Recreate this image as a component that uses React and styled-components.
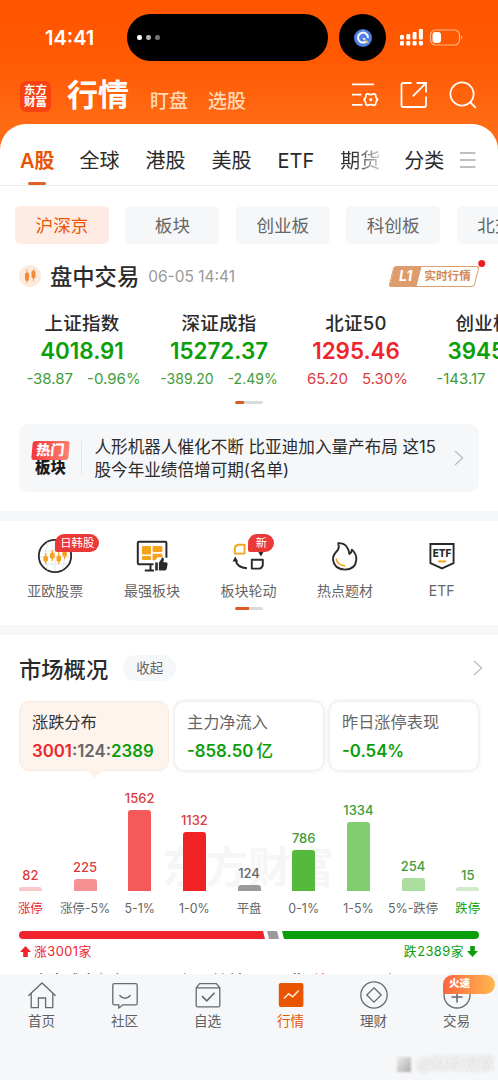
import styled, { createGlobalStyle } from "styled-components";

const RED = "#f0242c";
const GREEN = "#0a9e0a";
const ORANGE = "#ea5504";

const colors = { up: RED, down: GREEN, flat: "#666" };

const topTabs = ["A股", "全球", "港股", "美股", "ETF", "期货", "分类"];

const boards = ["沪深京", "板块", "创业板", "科创板", "北交所"];

const indexes = [
  { name: "上证指数", value: "4018.91", diff: "-38.87", pct: "-0.96%", dir: "down" },
  { name: "深证成指", value: "15272.37", diff: "-389.20", pct: "-2.49%", dir: "down", small: true },
  { name: "北证50", value: "1295.46", diff: "65.20", pct: "5.30%", dir: "up" },
  { name: "创业板指", value: "3945.57", diff: "-143.17", pct: "-3.50%", dir: "down" },
];

const bars = [
  { label: "涨停", value: 82, height: 4, fill: "#f9c9c9", text: "#dc3c40", mark: RED },
  { label: "涨停-5%", value: 225, height: 12, fill: "#f79090", text: "#dc3c40" },
  { label: "5-1%", value: 1562, height: 81, fill: "#f55a5a", text: "#dc3c40" },
  { label: "1-0%", value: 1132, height: 59, fill: "#f02222", text: "#dc3c40" },
  { label: "平盘", value: 124, height: 6, fill: "#9b9b9b", text: "#666" },
  { label: "0-1%", value: 786, height: 41, fill: "#55b93c", text: "#3f9c3a" },
  { label: "1-5%", value: 1334, height: 69, fill: "#82cc70", text: "#3f9c3a" },
  { label: "5%-跌停", value: 254, height: 13, fill: "#aadd9e", text: "#3f9c3a" },
  { label: "跌停", value: 15, height: 4, fill: "#d0ebc9", text: "#3f9c3a", mark: GREEN },
];

const Chevron = () => (
  <svg width="10" height="16" viewBox="0 0 10 16" fill="none" stroke="#bdbfc2" strokeWidth="1.4">
    <path d="M1 1l7.6 7L1 15" />
  </svg>
);

const StatusIcons = () => (
  <svg width="64" height="18" viewBox="0 0 64 18">
    <g fill="#fff">
      <rect x="0" y="6" width="4" height="4.5" rx="1" />
      <rect x="6.3" y="5" width="4" height="5.5" rx="1" />
      <rect x="12.6" y="3" width="4" height="7.5" rx="1" />
      <rect x="18.9" y="0" width="4" height="10.5" rx="1" />
      <rect x="0" y="12" width="4" height="4.5" rx="1.2" />
      <rect x="6.3" y="12" width="4" height="4.5" rx="1.2" />
      <rect x="12.6" y="12" width="4" height="4.5" rx="1.2" />
      <rect x="18.9" y="12" width="4" height="4.5" rx="1.2" />
      <rect x="32.5" y="3" width="8.5" height="11" rx="3" />
    </g>
    <rect x="30.5" y="1" width="29" height="15" rx="5" fill="none" stroke="#ffb58a" strokeWidth="1.2" />
    <path d="M61.2 6q2.4 2.3 0 4.8z" fill="#ffb58a" />
  </svg>
);

const FilterIcon = () => (
  <svg width="28" height="26" viewBox="0 0 28 26" fill="none" stroke="#fff" strokeWidth="1.8">
    <path d="M1 2.4h22M1 12.6h9.5M1 22.8h10.5" />
    <path
      d="M16.4 11.8q3.4 1.6 6.8 0 1 .2 1.4 1.2-.2 2.6 2 4.6-2.2 2-2 4.6-.4 1-1.4 1.2-3.4-1.6-6.8 0-1-.2-1.4-1.2.2-2.6-2-4.6 2.2-2 2-4.6.4-1 1.4-1.2z"
      strokeLinejoin="round"
    />
    <circle cx="19.8" cy="17.6" r="1.6" fill="#fff" stroke="none" />
  </svg>
);

const ShareIcon = () => (
  <svg width="28" height="28" viewBox="0 0 28 28" fill="none" stroke="#fff" strokeWidth="1.8">
    <path d="M11.5 2H3.2Q1.5 2 1.5 3.7v20.6Q1.5 26 3.2 26h21.1q1.7 0 1.7-1.7V15.5" />
    <path d="M12.8 15.4L25.6 2.4M16.6 2H26v9.6" />
  </svg>
);

const SearchIcon = () => (
  <svg width="28" height="28" viewBox="0 0 28 28" fill="none" stroke="#fff" strokeWidth="1.8">
    <circle cx="13" cy="13" r="11.6" />
    <path d="M21 21l5.8 5.8" />
  </svg>
);

const GlobeStockIcon = () => (
  <svg width="36" height="36" viewBox="0 0 36 36">
    <circle cx="18" cy="18" r="16.2" fill="#fff" stroke="#2a2a2a" strokeWidth="1.8" />
    <path d="M5 13h26M3 19h30M5 26h26M18 3v30M11 4q-5 14 0 28M25 4q5 14 0 28" stroke="#e3e6ea" strokeWidth="1" fill="none" />
    <g stroke="#f6a21b" strokeWidth="1.2">
      <path d="M8.7 15v11M15.3 12v11M21.8 14v12M27.6 11v10" />
      <g fill="#f6a21b">
        <rect x="7" y="18.5" width="3.4" height="4.6" rx="1" />
        <rect x="13.6" y="15" width="3.4" height="5" rx="1" />
        <rect x="20.1" y="18" width="3.4" height="5" rx="1" />
        <rect x="25.9" y="14" width="3.4" height="4" rx="1" />
      </g>
    </g>
  </svg>
);

const BoardIcon = () => (
  <svg width="32" height="34" viewBox="0 0 32 34">
    <path d="M17.5 25.3H2.8q-1 0-1-1V3.8q0-1 1-1h26.6q1 0 1 1v15" fill="none" stroke="#2a2a2a" strokeWidth="2" />
    <path d="M14.5 25v5.5M8.8 31.5H18" stroke="#2a2a2a" strokeWidth="2" />
    <g fill="#f6a21b">
      <rect x="6" y="7" width="9" height="8.5" rx="1" />
      <rect x="16.6" y="7" width="9.8" height="6" rx="1" />
      <rect x="6" y="17" width="9" height="4" rx="1" />
      <path d="M16.6 14.8h9.8v3.4h-4.8l-2.4 3h-2.6z" />
    </g>
    <path d="M19.2 23.5h2.6v8h-2.6zM22.9 23.8l2.4-3.8q.1-1.8 1.5-1.6 1.5.6 1 2.6l-.6 2.2h3q1.8.4 1.4 2l-1 4.8q-.4 1.5-2 1.5h-5.7z" fill="#2a2a2a" />
  </svg>
);

const RotateIcon = () => (
  <svg width="32" height="34" viewBox="0 0 32 34" fill="none" strokeWidth="1.9">
    <path d="M6.3 5.8h6.2v8.8H2.8V9.3q.6-3 3.5-3.5z" stroke="#f0a61f" strokeLinejoin="round" />
    <path d="M19.8 20.8h11v5.4q-.7 3-3.4 3.4h-7.6z" stroke="#2a2a2a" strokeLinejoin="round" />
    <path d="M3.6 21q1.3 7.6 11.4 8.2M17 6.5q9.8-.6 11.6 8.5" stroke="#2a2a2a" />
    <path d="M3.2 17.4l-2.6 5h5.6zM29 17.4l-2.8-4.6h5.4z" fill="#2a2a2a" />
  </svg>
);

const FlameIcon = () => (
  <svg width="28" height="30" viewBox="0 0 28 30" fill="none" strokeWidth="1.9">
    <path
      d="M7.2 2.2q9.4-1 11.2 10.8 2.3-1.4 2.5-4.4 4.9 4.4 4.4 10.2-.8 9.4-11.3 9.8Q3 28 2 18.6 1.8 14 6.2 9.8 8.6 7 7.2 2.2z"
      stroke="#2a2a2a"
      strokeLinejoin="round"
    />
    <path d="M5.2 17.5q1 6.8 8.8 7.4" stroke="#f0a61f" strokeWidth="1.7" />
  </svg>
);

const EtfIcon = () => (
  <svg width="28" height="28" viewBox="0 0 28 28">
    <path d="M2.4 2h23.2v19.2L14 26.4 2.4 21.2z" fill="none" stroke="#2a2a2a" strokeWidth="1.9" />
    <text x="14" y="15.4" textAnchor="middle" fontFamily="Inter" fontSize="10" fontWeight="800" fill="#2a2a2a">
      ETF
    </text>
    <path d="M10.2 19.4h7.8" stroke="#f0a61f" strokeWidth="2" />
  </svg>
);

const HomeIcon = () => (
  <svg width="30" height="30" viewBox="0 0 30 30" fill="none" stroke="#66696e" strokeWidth="1.3">
    <path d="M1.4 15.8L15 3l13.6 12.8M4.2 13.4v14.3h7.2V18h7.2v9.7h7.2V13.4" />
  </svg>
);

const ChatIcon = () => (
  <svg width="30" height="30" viewBox="0 0 30 30" fill="none" stroke="#66696e" strokeWidth="1.3">
    <path d="M4.4 3.6h21.2q1.6 0 1.6 1.6v18q0 1.6-1.6 1.6H13L8.8 28v-3.2H4.4q-1.6 0-1.6-1.6v-18q0-1.6 1.6-1.6z" />
    <path d="M9.4 15.2q5.6 6 11.2 0" strokeWidth="1.6" />
  </svg>
);

const PickIcon = () => (
  <svg width="30" height="30" viewBox="0 0 30 30" fill="none" stroke="#66696e" strokeWidth="1.3">
    <path d="M3.2 7.8l3.4-4.2h16.8l3.4 4.2v17.4q0 1.6-1.6 1.6H4.8q-1.6 0-1.6-1.6zM3.2 7.8h23.6" />
    <path d="M9 16.2l4.8 4.6 7.8-8" strokeWidth="1.6" />
  </svg>
);

const QuoteIcon = () => (
  <svg width="30" height="30" viewBox="0 0 30 30" fill="none">
    <rect x="2.8" y="3" width="24.6" height="24" rx="2" fill={ORANGE} />
    <path d="M8 18.6l4.7-4.8 4 3 6-6.2" stroke="#ffe9da" strokeWidth="1.5" />
  </svg>
);

const WealthIcon = () => (
  <svg width="30" height="30" viewBox="0 0 30 30" fill="none" stroke="#66696e" strokeWidth="1.3">
    <circle cx="15" cy="15" r="13.2" />
    <path d="M15 7.8l7.2 7.2-7.2 7.2L7.8 15z" />
  </svg>
);

const TradeIcon = () => (
  <svg width="30" height="30" viewBox="0 0 30 30" fill="none" stroke="#66696e" strokeWidth="1.3">
    <circle cx="15" cy="15" r="13" />
    <path d="M15 10v12.4M9.4 17h11.2" strokeWidth="1.6" />
  </svg>
);

const features = [
  { label: "亚欧股票", icon: <GlobeStockIcon />, tag: "日韩股" },
  { label: "最强板块", icon: <BoardIcon /> },
  { label: "板块轮动", icon: <RotateIcon />, tag: "新" },
  { label: "热点题材", icon: <FlameIcon /> },
  { label: "ETF", icon: <EtfIcon /> },
];

const navItems = [
  { label: "首页", icon: <HomeIcon /> },
  { label: "社区", icon: <ChatIcon /> },
  { label: "自选", icon: <PickIcon /> },
  { label: "行情", icon: <QuoteIcon />, active: true },
  { label: "理财", icon: <WealthIcon /> },
  { label: "交易", icon: <TradeIcon />, promo: "火速" },
];

export default function App() {
  return (
    <>
      <GlobalStyle />
      <Page>
        <StatusBar>
          <Clock>14:41</Clock>
          <Island>
            <Dot $o={1} />
            <Dot $o={0.7} />
            <Dot $o={0.45} />
          </Island>
          <AppBubble>
            <svg width="18" height="18" viewBox="0 0 18 18" fill="none">
              <circle cx="9" cy="9" r="9" fill="#4f7fe0" />
              <path d="M12 12.6A5 5 0 1 1 14 9" stroke="#fff" strokeWidth="2" />
              <path d="M8.4 8.4l3.6 1.4-2 1.8z" fill="#fff" />
              <path d="M11.4 11.6l2.6 2.2" stroke="#e8c34a" strokeWidth="1.8" />
            </svg>
          </AppBubble>
          <StatusIcons />
        </StatusBar>

        <TitleBar>
          <Logo>
            <span>东方</span>
            <span>财富</span>
          </Logo>
          <Title>行情</Title>
          <SubTitle>盯盘</SubTitle>
          <SubTitle>选股</SubTitle>
          <Tools>
            <FilterIcon />
            <ShareIcon />
            <SearchIcon />
          </Tools>
        </TitleBar>

        <Sheet>
          <Tabs>
            {topTabs.map((tab, i) => (
              <Tab key={tab} $active={i === 0} $fade={tab === "期货"}>
                {tab}
              </Tab>
            ))}
            <svg width="16" height="16" viewBox="0 0 16 16" stroke="#a9a9a9" strokeWidth="1.5">
              <path d="M0 1h15.5M0 8h15.5M0 15h15.5" />
            </svg>
          </Tabs>

          <Boards>
            {boards.map((board, i) => (
              <Board key={board} $active={i === 0}>
                {board}
              </Board>
            ))}
          </Boards>

          <SessionRow>
            <SessionIcon>
              <svg width="12" height="14" viewBox="0 0 12 14" fill="#f08c3c" stroke="#f08c3c">
                <path d="M3 0v14M9.5 0v12" strokeWidth="0.8" />
                <rect x="1.5" y="4" width="3" height="7.5" rx="1" />
                <rect x="8" y="2" width="3" height="7" rx="1" />
              </svg>
            </SessionIcon>
            <SessionTitle>盘中交易</SessionTitle>
            <SessionTime>06-05 14:41</SessionTime>
            <LevelBadge>
              <Level>
                <b>L1</b>
              </Level>
              <LevelText>
                <b>实时行情</b>
              </LevelText>
              <RedDot />
            </LevelBadge>
          </SessionRow>

          <Indexes>
            {indexes.map((item) => (
              <IndexItem key={item.name}>
                <IndexName>{item.name}</IndexName>
                <IndexValue $dir={item.dir}>{item.value}</IndexValue>
                <IndexChange $dir={item.dir} $small={item.small}>
                  <span>{item.diff}</span>
                  <span>{item.pct}</span>
                </IndexChange>
              </IndexItem>
            ))}
          </Indexes>
          <Pager $on={9} />

          <News>
            <NewsLogo>
              <HotTag>热门</HotTag>
              <HotText>板块</HotText>
            </NewsLogo>
            <NewsText>
              人形机器人催化不断 比亚迪加入量产布局 这15
              <br />
              股今年业绩倍增可期(名单)
            </NewsText>
            <Chevron />
          </News>
        </Sheet>

        <Features>
          <FeatureRow>
            {features.map((f) => (
              <Feature key={f.label}>
                <FeatureIcon>
                  {f.icon}
                  {f.tag && <FeatureTag>{f.tag}</FeatureTag>}
                </FeatureIcon>
                <FeatureLabel>{f.label}</FeatureLabel>
              </Feature>
            ))}
          </FeatureRow>
          <Pager $on={14} />
        </Features>

        <Overview>
          <OverviewHead>
            <OverviewTitle>市场概况</OverviewTitle>
            <Collapse>收起</Collapse>
            <Chevron />
          </OverviewHead>

          <Cards>
            <Card $active>
              <CardLabel>涨跌分布</CardLabel>
              <CardValue $dir="flat">
                <Up>3001</Up>:124:<Down>2389</Down>
              </CardValue>
            </Card>
            <Card>
              <CardLabel>主力净流入</CardLabel>
              <CardValue $dir="down">
                -858.50<Unit>亿</Unit>
              </CardValue>
            </Card>
            <Card>
              <CardLabel>昨日涨停表现</CardLabel>
              <CardValue $dir="down">-0.54%</CardValue>
            </Card>
          </Cards>

          <Chart>
            <Watermark>东方财富</Watermark>
            {bars.map((bar) => (
              <BarColumn key={bar.label}>
                <BarValue $color={bar.text}>{bar.value}</BarValue>
                <Bar style={{ height: bar.height }} $fill={bar.fill} />
                <BarLabel $color={bar.mark}>{bar.label}</BarLabel>
              </BarColumn>
            ))}
          </Chart>

          <Ratio>
            <RatioUp />
            <RatioFlat />
            <RatioDown />
          </Ratio>
          <Totals>
            <Total $dir="up">
              <svg width="11" height="11" viewBox="0 0 11 11" fill={RED}>
                <path d="M5.5 0L11 6H7.8v5H3.2V6H0z" />
              </svg>
              涨3001家
            </Total>
            <Total $dir="down">
              跌2389家
              <svg width="11" height="11" viewBox="0 0 11 11" fill={GREEN}>
                <path d="M5.5 11L11 5H7.8V0H3.2v5H0z" />
              </svg>
            </Total>
          </Totals>
          <Summary>
            大盘成交额超 2.51万亿，较前一日预期 <Up>放量</Up> 1200亿
          </Summary>
        </Overview>

        <NavBar>
          {navItems.map((item) => (
            <NavItem key={item.label} $active={item.active}>
              {item.icon}
              {item.label}
              {item.promo && <Promo>{item.promo}</Promo>}
            </NavItem>
          ))}
          <Signature>
            <i />
            <span>@财经观察</span>
          </Signature>
        </NavBar>
      </Page>
    </>
  );
}

const GlobalStyle = createGlobalStyle`
  * {
    box-sizing: border-box;
  }
  body {
    margin: 0;
    font-family: Inter, "Noto Sans CJK SC", sans-serif;
    color: #2b2b2b;
    background: #fff;
  }
  svg {
    display: block;
    flex-shrink: 0;
  }
`;

const Page = styled.div`
  display: flex;
  flex-direction: column;
  width: 498px;
  height: 1080px;
  overflow: hidden;
  white-space: nowrap;
  background: linear-gradient(#ff5500, #ff5a02 60px, #ff6c16 130px, #ff6c16 150px, #fff 150px);
`;

const StatusBar = styled.div`
  display: flex;
  align-items: center;
  height: 75px;
  padding-left: 45px;
`;
const Clock = styled.div`
  width: 82px;
  color: #fff;
  font-size: 20px;
  font-weight: 600;
`;
const Island = styled.div`
  display: flex;
  align-items: center;
  gap: 4.7px;
  width: 201px;
  height: 47px;
  padding-left: 10px;
  border-radius: 24px;
  background: #000;
`;
const Dot = styled.span`
  width: 4.5px;
  height: 4.5px;
  border-radius: 50%;
  background: #fff;
  opacity: ${(p) => p.$o};
`;
const AppBubble = styled.div`
  display: flex;
  align-items: center;
  justify-content: center;
  width: 47px;
  height: 47px;
  margin: 0 14px 0 11px;
  border-radius: 50%;
  background: #000;
`;

const TitleBar = styled.div`
  display: flex;
  align-items: center;
  height: 49px;
  padding: 0 21px 6px 20px;
`;
const Logo = styled.div`
  display: flex;
  flex-direction: column;
  align-items: center;
  justify-content: center;
  width: 31px;
  height: 31px;
  margin: -1px 16px 0 0;
  border-radius: 6px;
  background: #f8420f;
  color: #fff;
  font-size: 11.5px;
  font-weight: 700;
  line-height: 12.5px;
`;
const Title = styled.div`
  margin: -3px 21px 0 0;
  color: #fff;
  font-size: 31px;
  font-weight: 700;
  line-height: 36px;
`;
const SubTitle = styled.div`
  margin: 11px 20px 0 0;
  color: #ffd9b8;
  font-size: 19px;
  font-weight: 500;
  line-height: 24px;
`;
const Tools = styled.div`
  display: flex;
  align-items: center;
  gap: 21px;
  margin: -3px 0 0 auto;
`;

const Sheet = styled.div`
  height: 387px;
  border-radius: 26px 26px 0 0;
  background: #fff;
`;
const Tabs = styled.div`
  display: flex;
  align-items: center;
  gap: 26px;
  height: 62px;
  padding: 0 22px 0 20px;
  border-bottom: 1px solid #eceef0;

  svg {
    margin: 10px 0 0 -10.5px;
  }
`;
const Tab = styled.div`
  position: relative;
  padding-top: 14px;
  font-size: 20px;
  line-height: 47px;
  color: ${(p) => (p.$active ? ORANGE : "#2b2b2b")};
  font-weight: ${(p) => (p.$active ? 600 : 400)};
  ${(p) =>
    p.$fade &&
    `
    background: linear-gradient(90deg, #333 35%, #ccc);
    background-clip: text;
    color: transparent;
    margin-right: -2px;
  `}
  ${(p) =>
    p.$active &&
    `
    margin-right: -1px;
    &::after {
      content: "";
      position: absolute;
      left: 8px;
      bottom: 0;
      width: 18px;
      height: 3px;
      border-radius: 2px;
      background: #e0602c;
    }
  `}
`;

const Boards = styled.div`
  display: flex;
  gap: 16.4px;
  padding: 20px 0 0 15px;
  overflow: hidden;
`;
const Board = styled.div`
  flex: 0 0 94px;
  height: 38px;
  border-radius: 5px;
  text-align: center;
  font-size: 17.6px;
  line-height: 39px;
  color: ${(p) => (p.$active ? ORANGE : "#666")};
  background: ${(p) => (p.$active ? "#feece4" : "#f6f7f9")};
`;

const SessionRow = styled.div`
  display: flex;
  align-items: center;
  height: 32px;
  margin-top: 16px;
  padding: 0 19px;
`;
const SessionIcon = styled.div`
  display: flex;
  align-items: center;
  justify-content: center;
  width: 22px;
  height: 22px;
  margin-right: 9px;
  border-radius: 50%;
  background: #fdeadb;
`;
const SessionTitle = styled.div`
  margin-top: -2px;
  font-size: 22.3px;
  font-weight: 500;
`;
const SessionTime = styled.div`
  margin-left: 9px;
  color: #999;
  font-size: 15.5px;
`;
const LevelBadge = styled.div`
  position: relative;
  display: flex;
  width: 86px;
  height: 21px;
  margin: 0 2px 0 auto;
  border: 1.5px solid #dc9c6c;
  border-radius: 3px;
  transform: skewX(-14deg);
  font-size: 11.7px;
  line-height: 18px;

  b {
    display: block;
    transform: skewX(14deg);
  }
`;
const Level = styled.div`
  width: 27px;
  background: #dc9c6c;
  color: #fff;
  font-size: 14px;
  font-style: italic;
  text-align: center;
`;
const LevelText = styled.div`
  flex: 1;
  color: #d08a5a;
  text-align: center;
`;
const RedDot = styled.i`
  position: absolute;
  top: -7px;
  right: -6px;
  width: 7px;
  height: 7px;
  border-radius: 50%;
  background: #ee1c25;
  transform: skewX(14deg);
`;

const Indexes = styled.div`
  display: flex;
  margin: 19px 0 0 13.5px;
  overflow: hidden;
`;
const IndexItem = styled.div`
  display: flex;
  flex: 0 0 137px;
  flex-direction: column;
  align-items: center;
`;
const IndexName = styled.div`
  font-size: 18.5px;
  font-weight: 500;
  line-height: 24px;
  letter-spacing: 0.3px;
`;
const IndexValue = styled.div`
  margin-top: 1px;
  font-size: 22.4px;
  font-weight: 600;
  line-height: 30px;
  color: ${(p) => colors[p.$dir]};
`;
const IndexChange = styled.div`
  display: flex;
  gap: 14px;
  padding-left: ${(p) => (p.$small ? 0 : 3)}px;
  font-size: ${(p) => (p.$small ? 14 : 15)}px;
  line-height: 26px;
  color: ${(p) => (p.$dir === "up" ? "#dc3c40" : "#3f9c3a")};
`;
const Pager = styled.div`
  width: 28px;
  height: 3px;
  margin: 9px auto 0;
  border-radius: 2px;
  background: linear-gradient(90deg, #dd5a22 ${(p) => p.$on}px, #d8dbde ${(p) => p.$on}px);
`;

const News = styled.div`
  display: flex;
  align-items: center;
  height: 68px;
  margin: 20px 19px 0;
  padding: 0 15px 0 13px;
  border-radius: 9px;
  background: #f6f7f9;

  svg {
    margin-left: auto;
  }
`;
const NewsLogo = styled.div`
  width: 37px;
  text-align: center;
  line-height: 17px;
`;
const HotTag = styled.div`
  height: 19px;
  border-radius: 3px;
  background: linear-gradient(90deg, #f4383c, #fa8070);
  color: #fff;
  font-size: 14px;
  font-weight: 900;
  line-height: 18px;
  transform: skewX(-5deg);
`;
const HotText = styled.div`
  font-size: 15.5px;
  font-weight: 900;
  line-height: 16px;
  color: #1d1d1d;
`;
const NewsText = styled.div`
  margin-left: 12px;
  padding: 1px 0 0 13.5px;
  background: linear-gradient(#e2e4e6, #e2e4e6) 0 6px / 1px 34px no-repeat;
  font-size: 16.6px;
  line-height: 23px;
`;

const Features = styled.div`
  height: 124px;
  padding-top: 15px;
  border-top: 10px solid #f6f7f8;
  border-bottom: 10px solid #f6f7f8;
  background: #fff;
`;
const FeatureRow = styled.div`
  display: flex;
  padding: 0 8px 0 7px;
`;
const Feature = styled.div`
  display: flex;
  flex: 1;
  flex-direction: column;
  align-items: center;
`;
const FeatureIcon = styled.div`
  position: relative;
  display: flex;
  align-items: center;
  height: 40px;
`;
const FeatureTag = styled.span`
  position: absolute;
  top: -2px;
  left: 50%;
  min-width: 26px;
  height: 18px;
  padding: 0 5px;
  border-radius: 9px 9px 9px 2px;
  background: #e93a38;
  color: #fff;
  font-size: 11.3px;
  line-height: 18px;
  text-align: center;
`;
const FeatureLabel = styled.div`
  font-size: 14px;
  line-height: 20px;
  margin-top: 5px;
  margin-bottom: -3px;
  color: #666;
`;

const Overview = styled.div`
  display: flex;
  flex-direction: column;
  height: 339px;
  padding: 16px 19px 0;
  overflow: hidden;
  background: #fff;
`;
const OverviewHead = styled.div`
  display: flex;
  flex-shrink: 0;
  align-items: center;
  height: 34px;
  margin-right: -4px;

  svg {
    margin-left: auto;
  }
`;
const OverviewTitle = styled.div`
  font-size: 22.3px;
  font-weight: 500;
`;
const Collapse = styled.div`
  width: 53px;
  margin-left: 15px;
  border-radius: 13px;
  background: #f6f7f8;
  color: #666;
  font-size: 13.5px;
  line-height: 26px;
  text-align: center;
`;
const Cards = styled.div`
  display: flex;
  flex-shrink: 0;
  gap: 5px;
  margin-top: 16px;
`;
const Card = styled.div`
  position: relative;
  flex: 1;
  height: 70px;
  padding: 8px 0 0 12px;
  border-radius: 10px;
  color: ${(p) => (p.$active ? "#333" : "#666")};
  background: ${(p) => (p.$active ? "#fef4ee" : "#fff")};
  border: 1px solid ${(p) => (p.$active ? "#fbe8dc" : "#eee")};
  ${(p) => !p.$active && "box-shadow: 0 0 4px rgba(0, 0, 0, 0.1);"}
  ${(p) =>
    p.$active &&
    `
    &::after {
      content: "";
      position: absolute;
      top: 68px;
      left: 67px;
      border: 8px solid transparent;
      border-top: 8px solid #fef1e9;
      border-bottom: 0;
    }
  `}
`;
const CardLabel = styled.div`
  font-size: 16.2px;
  line-height: 24px;
`;
const CardValue = styled.div`
  margin-top: 4px;
  font-size: 16.8px;
  font-weight: 600;
  line-height: 26px;
  color: ${(p) => colors[p.$dir]};
`;
const Unit = styled.span`
  margin-left: 3px;
  font-weight: 500;
`;
const Up = styled.span`
  color: ${RED};
`;
const Down = styled.span`
  color: ${GREEN};
`;

const Chart = styled.div`
  position: relative;
  display: flex;
  flex-shrink: 0;
  align-items: flex-end;
  height: 148px;
  margin: 0 -16px;
`;
const Watermark = styled.div`
  position: absolute;
  left: 159px;
  bottom: 28px;
  color: #f6f6f6;
  font-size: 43px;
  font-weight: 700;
  line-height: 48px;
`;
const BarColumn = styled.div`
  position: relative;
  display: flex;
  flex: 1 0 0;
  min-width: 0;
  flex-direction: column;
  align-items: center;
`;
const BarValue = styled.div`
  font-size: 13px;
  line-height: 20px;
  margin-bottom: 2px;
  font-weight: 500;
  color: ${(p) => p.$color};
`;
const Bar = styled.div`
  width: 23px;
  border-radius: 3px 3px 0 0;
  background: ${(p) => p.$fill};
`;
const BarLabel = styled.div`
  padding-top: 8px;
  font-size: 12.4px;
  line-height: 20px;
  color: ${(p) => p.$color || "#666"};
`;

const Ratio = styled.div`
  display: flex;
  flex-shrink: 0;
  gap: 3px;
  height: 8px;
  margin-top: 12px;
`;
const RatioUp = styled.div`
  flex: 0 0 246px;
  border-radius: 4px 0 0 4px;
  background: ${RED};
  clip-path: polygon(0 0, calc(100% - 2px) 0, 100% 100%, 0 100%);
`;
const RatioFlat = styled.div`
  flex: 0 0 12px;
  margin-left: -1px;
  background: #999;
  clip-path: polygon(0 0, calc(100% - 2px) 0, 100% 100%, 2px 100%);
`;
const RatioDown = styled.div`
  flex: 1;
  border-radius: 0 4px 4px 0;
  background: ${GREEN};
  clip-path: polygon(0 0, 100% 0, 100% 100%, 2px 100%);
`;
const Totals = styled.div`
  display: flex;
  flex-shrink: 0;
  justify-content: space-between;
  padding: 0 1px;
`;
const Total = styled.div`
  display: flex;
  align-items: center;
  gap: 3px;
  font-size: 12.8px;
  letter-spacing: 0.5px;
  line-height: 25px;
  color: ${(p) => colors[p.$dir]};
`;
const Summary = styled.div`
  flex-shrink: 0;
  margin-top: 5px;
  padding-left: 14px;
  font-size: 16px;
  line-height: 24px;
`;

const NavBar = styled.div`
  position: relative;
  display: flex;
  flex: 1;
  background: #f6f7f9;
`;
const NavItem = styled.div`
  position: relative;
  display: flex;
  flex: 1;
  flex-direction: column;
  align-items: center;
  padding-top: 6px;
  font-size: 13.6px;
  line-height: 22px;
  color: ${(p) => (p.$active ? ORANGE : "#5c5f63")};
`;
const Promo = styled.span`
  position: absolute;
  top: 1px;
  left: 28px;
  width: 52px;
  height: 19px;
  padding-left: 6px;
  border-radius: 10px 10px 10px 2px;
  background: linear-gradient(90deg, #fa6540, #ffb94e);
  color: #fff;
  font-size: 10.5px;
  font-weight: 900;
  line-height: 18px;
`;
const Signature = styled.div`
  position: absolute;
  right: 4px;
  bottom: 7px;
  display: flex;
  align-items: center;
  gap: 6px;
  filter: blur(1.2px);
  color: #fff;
  font-size: 15.5px;
  line-height: 18px;
  text-shadow: 0 0 3px #aaa;

  i {
    width: 14px;
    height: 15px;
    background: linear-gradient(135deg, #eee, #aaa);
  }
`;
